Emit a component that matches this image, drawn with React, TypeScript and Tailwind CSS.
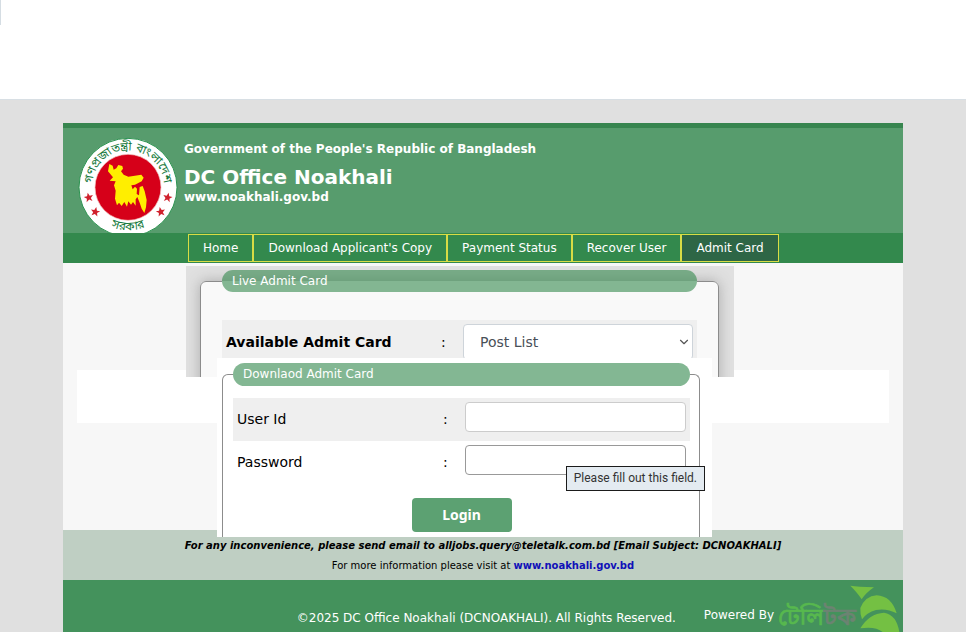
import { useState } from 'react';
import { ChevronDown } from 'lucide-react';

const navItems = [
    { label: 'Home', active: false },
    { label: "Download Applicant's Copy", active: false },
    { label: 'Payment Status', active: false },
    { label: 'Recover User', active: false },
    { label: 'Admit Card', active: true },
];

const stars = [
    { x: 85, y: 232, r: -12 },
    { x: 105, y: 275, r: 12 },
    { x: 301, y: 275, r: -12 },
    { x: 322, y: 232, r: 12 },
];

function Emblem() {
    return (
        <svg viewBox="53 51 300 288" className="h-24 w-[100px] shrink-0" role="img" aria-label="Government seal of Bangladesh">
            <defs>
                <path id="arcTop" d="M98 225 A108 108 0 1 1 308 225" />
                <path id="arcBottom" d="M76 232 A131 131 0 0 0 330 232" />
            </defs>
            <circle cx="203" cy="202" r="147" fill="#fff" stroke="#2c9350" strokeWidth="3" />
            <circle cx="203" cy="202" r="99" fill="#d60019" stroke="#f3c9c4" strokeWidth="2" />
            <path
                d="M147 132 L157 137 L160 149 L168 145 L174 135 L186 138 L188 146 L182 154 L190 164 L204 170 L243 164 L250 173 L244 184 L224 194 L213 196 L217 208 L224 200 L230 206 L229 222 L236 226 L238 201 L247 198 L253 214 L259 240 L257 262 L252 279 L244 266 L238 248 L231 231 L226 238 L226 257 L218 246 L212 254 L204 244 L200 260 L192 246 L184 258 L176 248 L170 256 L164 236 L166 212 L161 196 L166 184 L148 182 L158 172 L143 154 Z"
                fill="#ffee00"
            />
            <g fill="#177a3d" fontFamily="'Noto Sans Bengali', 'Noto Sans', sans-serif" fontSize="36" fontWeight="400">
                <text textAnchor="middle"><textPath href="#arcTop" startOffset="50%">গণপ্রজাতন্ত্রী বাংলাদেশ</textPath></text>
                <text textAnchor="middle"><textPath href="#arcBottom" startOffset="50%">সরকার</textPath></text>
            </g>
            {stars.map((s) => (
                <path key={s.x} transform={`translate(${s.x} ${s.y}) rotate(${s.r})`} d="M0 -14 L4 -4 L14 -4 L6 3 L9 13 L0 7 L-9 13 L-6 3 L-14 -4 L-4 -4 Z" fill="#d0202c" />
            ))}
        </svg>
    );
}

function TeletalkLogo() {
    return (
        <svg viewBox="0 0 366 144" className="h-12 w-[122px] shrink-0" role="img" aria-label="Teletalk">
            <g fontFamily="'Noto Sans Bengali', 'Noto Sans', sans-serif" fontSize="72" strokeWidth="2">
                <text x="0" y="122" fill="#57b84e" stroke="#57b84e">টেলি<tspan fill="#6c8372" stroke="#6c8372">টক</tspan></text>
            </g>
            <g fill="#74c043">
                <path d="M217 5 Q240 8 288 10 Q264 26 251 46 Q240 28 217 5 Z" />
                <path d="M247 72 Q262 36 296 34 Q340 36 356 88 Q326 72 294 78 Q266 86 252 106 Q246 90 247 72 Z" />
                <path d="M247 133 Q274 88 318 86 Q356 92 364 144 L314 144 Q292 126 247 133 Z" />
            </g>
        </svg>
    );
}

export default function App() {
    const [userId, setUserId] = useState('');
    const [password, setPassword] = useState('');

    return (
        <div className="min-h-screen bg-[#e0e0e0] font-['DejaVu_Sans',Verdana,sans-serif] text-black">
            <div className="h-[100px] border-b border-[#d8dfe4] bg-white">
                <div className="h-[25px] w-px bg-[#d5dde3]" />
            </div>

            <div className="mx-auto mt-[23px] max-w-[840px] border-t-[5px] border-[#37854f]">
                <header className="flex gap-[6px] bg-[#579c6d] pl-[15px] pt-[9px] font-bold text-white">
                    <Emblem />
                    <div className="pt-1">
                        <p className="text-xs leading-4">Government of the People's Republic of Bangladesh</p>
                        <h1 className="pt-2 text-xl leading-6">DC Office Noakhali</h1>
                        <p className="text-xs leading-4">www.noakhali.gov.bd</p>
                    </div>
                </header>

                <nav className="flex h-[30px] bg-[#33894d] py-px pl-[125px] text-xs text-white">
                    {navItems.map((item) => (
                        <a key={item.label} href="#" className={item.active ? 'flex items-center border border-[#d8dc45] bg-[#2e6646] px-[14px]' : 'flex items-center border border-[#d8dc45] px-[14px]'}>
                            {item.label}
                        </a>
                    ))}
                </nav>

                <main className="grid bg-[#f7f7f7]">
                    {/* pale strip behind the forms */}
                    <div className="col-start-1 row-start-1 mx-[14px] mt-[107px] h-[53px] bg-white" />

                    <div className="z-10 col-start-1 row-start-1 flex flex-col pt-[3px]">
                        <section className="ml-[123px] h-[111px] max-w-[548px] overflow-hidden bg-[#e0e0e0] pl-[14px] pr-[15px] pt-1">
                            <fieldset className="h-40 rounded-md border border-[#8c8c8c] bg-[#f9f9f9] px-[21px] shadow-[0_0_14px_#aaa]">
                                <legend className="h-[22px] w-full rounded-full bg-[#33894d]/60 px-[10px] text-xs leading-[22px] text-white">Live Admit Card</legend>
                                <div className="mt-7 flex h-12 bg-[#efefef] pl-1 pr-1 pt-1 text-sm">
                                    <label htmlFor="post" className="w-[215px] pt-2 font-bold leading-5">Available Admit Card</label>
                                    <span className="w-[22px] pt-2 leading-5">:</span>
                                    <div className="relative min-w-0 flex-1">
                                        <select id="post" className="h-9 w-full appearance-none rounded border border-[#ced4da] bg-white pl-4 text-[#495057]">
                                            <option>Post List</option>
                                        </select>
                                        <ChevronDown size={14} className="pointer-events-none absolute right-[2px] top-[11px] text-[#555]" />
                                    </div>
                                </div>
                            </fieldset>
                        </section>

                        <section className="relative -mb-[7px] -mt-[19px] ml-[154px] max-w-[495px] bg-white pl-[5px] pr-3 pt-[5px]">
                            <fieldset className="rounded-t-md border border-b-0 border-[#8c8c8c] pl-[10px] pr-[9px] pb-[5px]">
                                <legend className="h-[23px] w-full rounded-full bg-[#83b793] px-[10px] text-xs leading-[22px] text-white">Downlaod Admit Card</legend>
                                <form onSubmit={(e) => e.preventDefault()} className="pt-3 text-sm">
                                    <div className="flex h-[43px] bg-[#efefef] px-1 pt-1">
                                        <label htmlFor="userId" className="w-[206px] pt-[7px] leading-5">User Id</label>
                                        <span className="w-[22px] pt-[7px] leading-5">:</span>
                                        <input id="userId" type="text" value={userId} onChange={(e) => setUserId(e.target.value)} className="h-[30px] min-w-0 flex-1 rounded border border-[#ccc] bg-white px-2" />
                                    </div>
                                    <div className="relative flex h-[43px] px-1 pt-1">
                                        <label htmlFor="password" className="w-[206px] pt-[7px] leading-5">Password</label>
                                        <span className="w-[22px] pt-[7px] leading-5">:</span>
                                        <input id="password" type="password" required value={password} onChange={(e) => setPassword(e.target.value)} className="h-[30px] min-w-0 flex-1 rounded border border-[#999] bg-white px-2" />
                                        <div role="tooltip" className="absolute -right-[15px] top-[25px] h-[25px] whitespace-nowrap border border-[#1b1b1b] bg-[#e4ebf1] px-[7px] font-[Roboto,sans-serif] text-xs leading-[23px] text-[#333]">
                                            Please fill out this field.
                                        </div>
                                    </div>
                                    <div className="flex justify-center pt-[14px]">
                                        <button type="submit" className="h-[34px] w-[100px] rounded-sm bg-[#5ca172] font-['Noto_Sans',Arial,sans-serif] text-sm font-bold text-white">Login</button>
                                    </div>
                                </form>
                            </fieldset>
                        </section>
                    </div>
                </main>

                <div className="bg-[#bfcfc3] pb-1 pt-[6px] text-center text-[10px] leading-5">
                    <p className="font-bold italic">For any inconvenience, please send email to alljobs.query@teletalk.com.bd [Email Subject: DCNOAKHALI]</p>
                    <p>
                        For more information please visit at <a href="#" className="font-bold text-[#1010b8]">www.noakhali.gov.bd</a>
                    </p>
                </div>

                <footer className="flex h-[52px] justify-end overflow-hidden bg-[#44925c] pr-[3px] text-xs leading-4 text-white">
                    <p className="pt-[30px]">©2025 DC Office Noakhali (DCNOAKHALI). All Rights Reserved.</p>
                    <p className="pl-7 pr-1 pt-[27px]">Powered By</p>
                    <div className="pt-1"><TeletalkLogo /></div>
                </footer>
            </div>
        </div>
    );
}
